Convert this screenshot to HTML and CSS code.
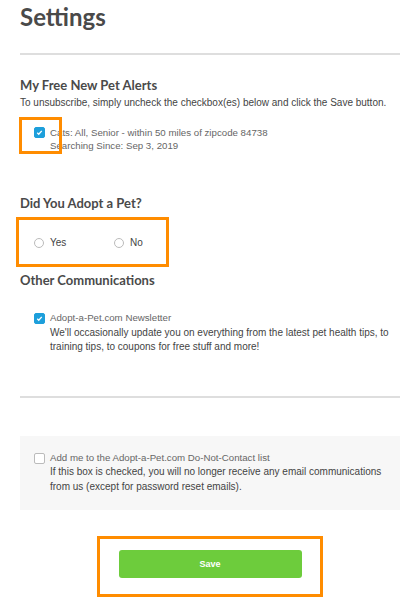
FILE: index.html
```html
<!DOCTYPE html>
<html lang="en">
<head>
  <meta charset="UTF-8">
  <meta name="viewport" content="width=device-width, initial-scale=1.0">
  <title>Settings - Adopt-a-Pet.com</title>
  <link rel="stylesheet" href="styles.css">
</head>
<body>

  <h1>Settings</h1>
  <hr class="divider">

  <!-- Alertas de mascotas -->
  <section class="alerts">
    <h2>My Free New Pet Alerts</h2>
    <p class="hint">To unsubscribe, simply uncheck the checkbox(es) below and click the Save button.</p>

    <label class="option">
      <span class="check checked"><svg viewBox="0 0 12 12"><path d="M3 6.2l2 2 4-4.4" /></svg></span>
      <span class="option-text option-title">
        Cats: All, Senior - within 50 miles of zipcode 84738<br>
        Searching Since: Sep 3, 2019
      </span>
    </label>
  </section>

  <!-- Adopcion -->
  <section class="adopt">
    <h2>Did You Adopt a Pet?</h2>
    <div class="radios">
      <label class="radio"><span class="circle"></span>Yes</label>
      <label class="radio"><span class="circle"></span>No</label>
    </div>
  </section>

  <!-- Otras comunicaciones -->
  <section class="other">
    <h2>Other Communications</h2>
    <label class="option">
      <span class="check checked"><svg viewBox="0 0 12 12"><path d="M3 6.2l2 2 4-4.4" /></svg></span>
      <span class="option-text">
        <span class="option-title">Adopt-a-Pet.com Newsletter</span><br>
        We'll occasionally update you on everything from the latest pet health tips, to training tips, to coupons for free stuff and more!
      </span>
    </label>
  </section>

  <hr class="divider divider-bottom">

  <div class="no-contact">
    <label class="option">
      <span class="check"></span>
      <span class="option-text">
        <span class="option-title">Add me to the Adopt-a-Pet.com Do-Not-Contact list</span><br>
        If this box is checked, you will no longer receive any email communications from us (except for password reset emails).
      </span>
    </label>
  </div>

  <div class="actions">
    <button type="button" class="save">Save</button>
  </div>

  <!-- Recuadros de resaltado -->
  <div class="highlight hl-alert"></div>
  <div class="highlight hl-adopt"></div>
  <div class="highlight hl-save"></div>

</body>
</html>
```

FILE: styles.css
```css
body {
  font-family: "Liberation Sans", Arial, sans-serif;
  color: #444;
  margin: 0;
  padding: 0 11px 40px 20px;
  background-color: white;
  position: relative;
  width: 380px;
}

h1 {
  font-family: Lato, "Noto Sans", sans-serif;
  font-weight: bold;
  font-size: 24px;
  line-height: 30px;
  color: #4a4a4a;
  margin: 2px 0 0 0;
}

h2 {
  font-family: Lato, "Noto Sans", sans-serif;
  font-weight: bold;
  font-size: 13px;
  line-height: 18px;
  color: #4a4a4a;
  margin: 0;
}

.divider {
  border: none;
  border-top: 2px solid #dedede;
  margin: 21px 0 0 0;
}

.divider-bottom {
  margin-top: 41px;
}

.alerts {
  margin-top: 21px;
}

.hint {
  font-size: 10px;
  line-height: 14px;
  margin: 2px 0 0 0;
}

.option {
  display: flex;
  align-items: flex-start;
  gap: 5px;
  padding-left: 14px;
  font-size: 10px;
  line-height: 14.5px;
}

.alerts .option {
  margin-top: 16px;
  line-height: 13px;
}

.check {
  flex: none;
  box-sizing: border-box;
  width: 11px;
  height: 11px;
  margin-top: 2px;
  border: 1px solid #bbb;
  border-radius: 2px;
  background-color: white;
  display: flex;
}

.alerts .check {
  margin-top: 1px;
}

.check.checked {
  background-color: #1d9fdb;
  border-color: #1d9fdb;
}

.check svg {
  width: 9px;
  height: 9px;
  fill: none;
  stroke: white;
  stroke-width: 1.8;
}

.option-title {
  color: #666;
  font-size: 9.7px;
}

.adopt {
  margin-top: 42px;
}

.radios {
  display: flex;
  padding: 24px 0 0 14px;
  font-size: 10px;
  line-height: 14px;
}

.radio {
  display: flex;
  align-items: center;
  gap: 6px;
  width: 80px;
}

.circle {
  box-sizing: border-box;
  width: 10px;
  height: 10px;
  border: 1px solid #bbb;
  border-radius: 50%;
}

.other {
  margin-top: 21px;
}

.other .option {
  margin-top: 22px;
}

.no-contact {
  margin-top: 38px;
  background-color: #f7f7f7;
  padding: 15px 0 16px 0;
}

.actions {
  display: flex;
  justify-content: center;
  padding-top: 40px;
}

.save {
  width: 183px;
  height: 28px;
  background-color: #6dcc3c;
  color: white;
  border: none;
  border-radius: 3px;
  font-family: "Liberation Sans", Arial, sans-serif;
  font-weight: bold;
  font-size: 9px;
  cursor: pointer;
}

.highlight {
  position: absolute;
  border: 3px solid #ff8c00;
  box-sizing: border-box;
}

.hl-alert {
  left: 19px;
  top: 117px;
  width: 43px;
  height: 37px;
}

.hl-adopt {
  left: 16px;
  top: 217px;
  width: 153px;
  height: 50px;
}

.hl-save {
  left: 97px;
  top: 536px;
  width: 226px;
  height: 61px;
}
```
